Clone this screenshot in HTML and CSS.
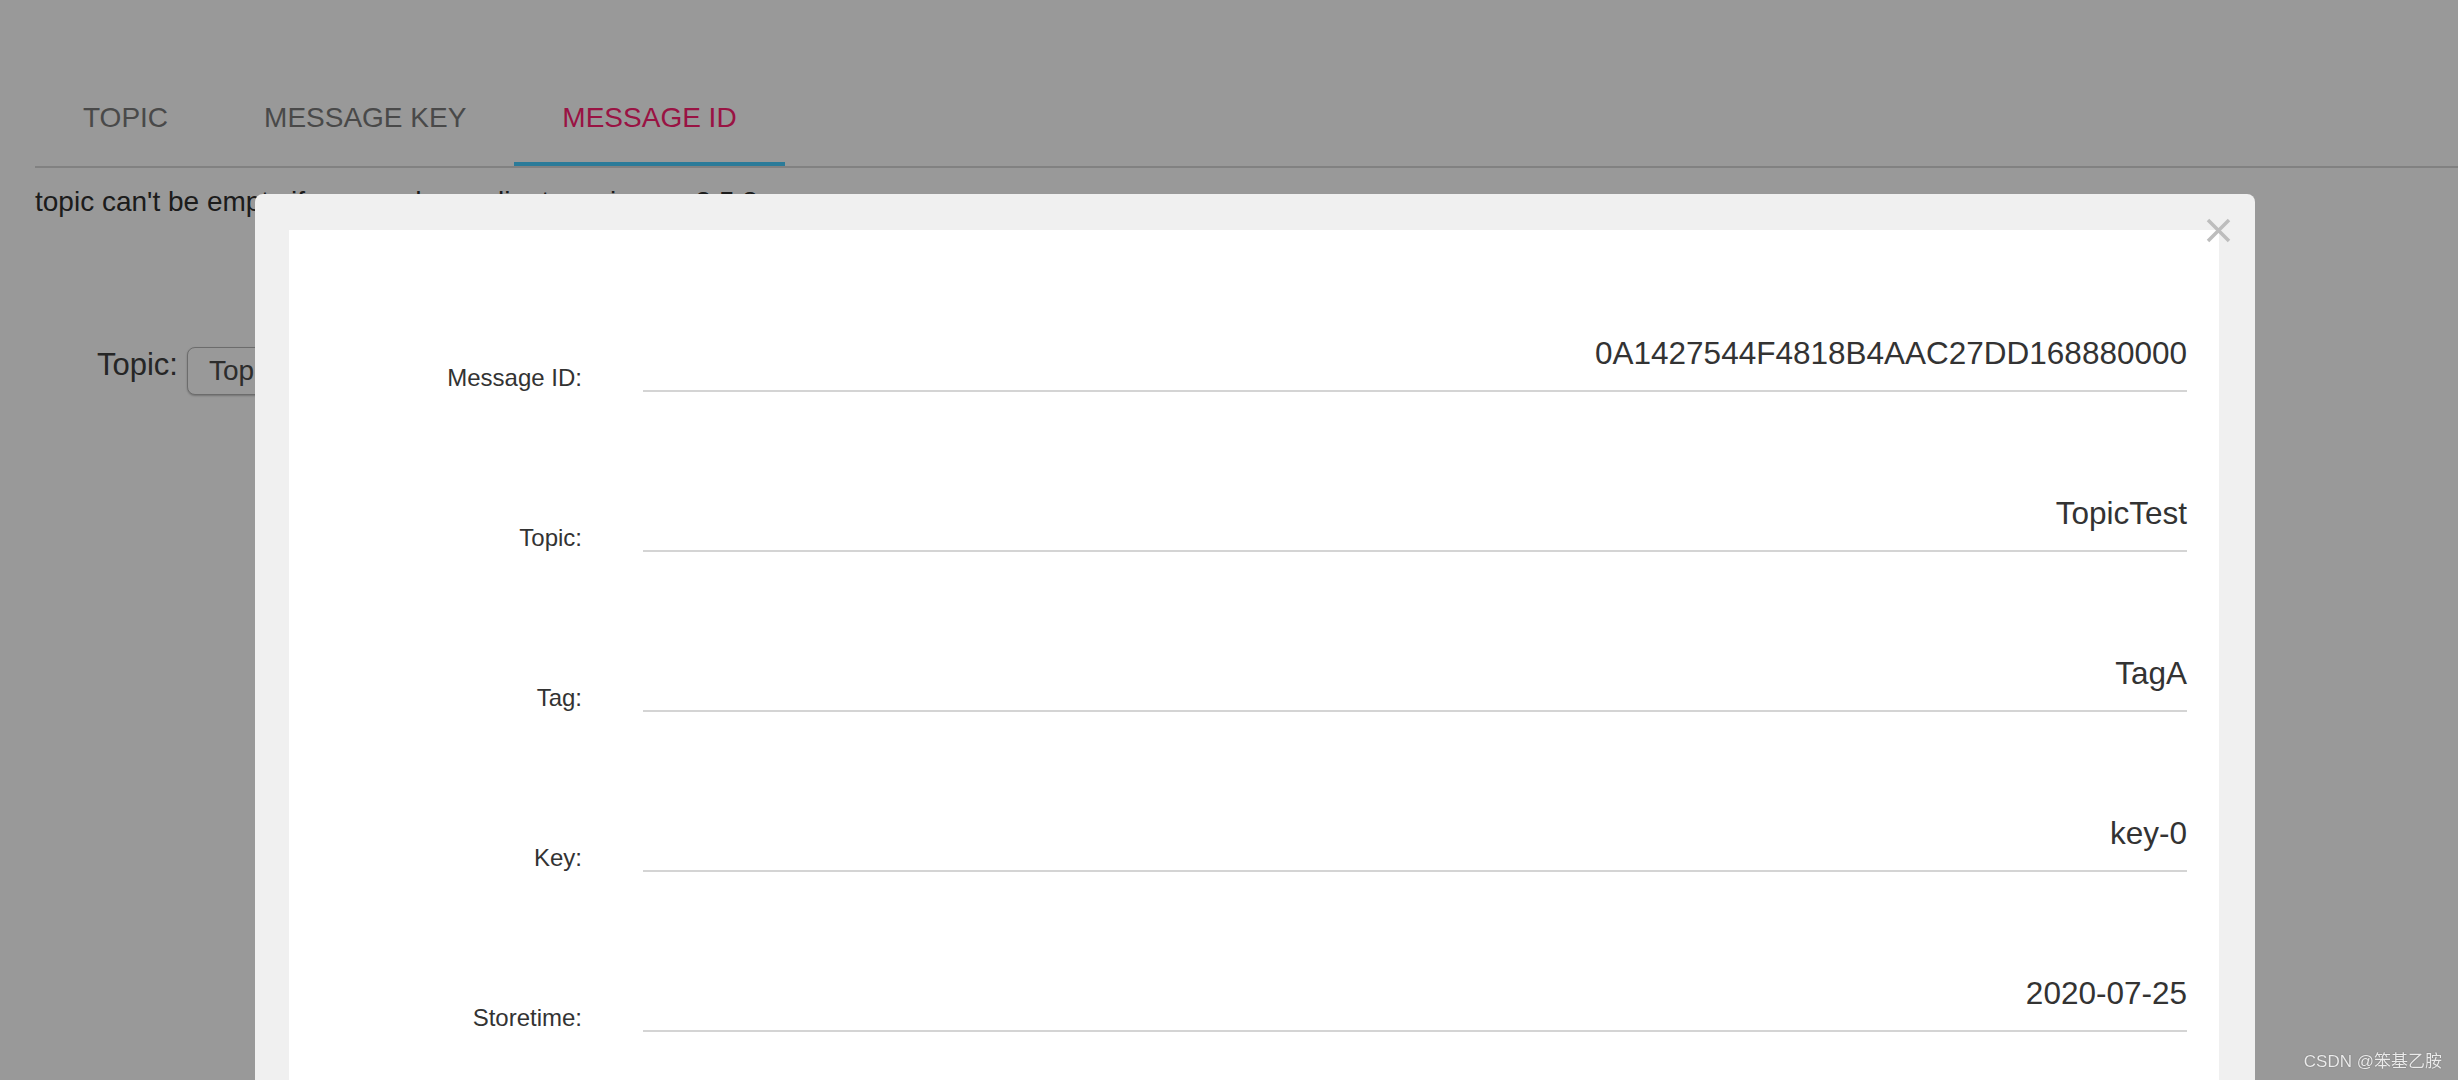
FILE: index.html
```html
<!DOCTYPE html>
<html lang="en">
<head>
<meta charset="utf-8">
<title>Message</title>
<link rel="stylesheet" href="styles.css">
</head>
<body>
<div class="page">
  <nav class="tabs">
    <div class="tab">TOPIC</div>
    <div class="tab">MESSAGE KEY</div>
    <div class="tab active">MESSAGE ID</div>
  </nav>
  <p class="hint">topic can't be empty if you producer client version &gt;= 3.5.8</p>
  <div class="query">
    <label class="query-label" for="topic">Topic:</label>
    <input class="query-input" id="topic" type="text" placeholder="Topic">
  </div>
</div>

<div class="backdrop"></div>

<div class="modal">
  <button class="modal-close" type="button" aria-label="Close">
    <svg width="25" height="25" viewBox="0 0 25 25"><path d="M2 2 L23 23 M23 2 L2 23" stroke="#bdbdbd" stroke-width="3.5" fill="none"/></svg>
  </button>
  <div class="modal-body">
    <div class="field-row">
      <div class="field-label">Message ID:</div>
      <div class="field-value">0A1427544F4818B4AAC27DD168880000</div>
    </div>
    <div class="field-row">
      <div class="field-label">Topic:</div>
      <div class="field-value">TopicTest</div>
    </div>
    <div class="field-row">
      <div class="field-label">Tag:</div>
      <div class="field-value">TagA</div>
    </div>
    <div class="field-row">
      <div class="field-label">Key:</div>
      <div class="field-value">key-0</div>
    </div>
    <div class="field-row">
      <div class="field-label">Storetime:</div>
      <div class="field-value">2020-07-25</div>
    </div>
  </div>
</div>

<div class="watermark">CSDN @笨基乙胺</div>
</body>
</html>
```
FILE: styles.css
```css
html, body {
  margin: 0;
  height: 100%;
  overflow: hidden;
}

body {
  font-family: "Liberation Sans", Arial, "Noto Sans CJK SC", sans-serif;
  background: #ffffff;
}

.page {
  padding: 94px 0 0 35px;
}

.tabs {
  display: flex;
  border-bottom: 2px solid #d8d8d8;
}

.tab {
  font-size: 28px;
  line-height: 48px;
  padding: 0 48px 20px;
  border-bottom: 4px solid transparent;
  color: #7b7b7b;
}

.tab.active {
  color: #ff2170;
  border-bottom-color: #49ceff;
}

.hint {
  margin: 18px 0 0;
  font-size: 28px;
  line-height: 32px;
  color: #2f2f2f;
}

.query {
  display: flex;
  align-items: flex-start;
  gap: 9px;
  margin-top: 129px;
  padding-left: 62px;
}

.query-label {
  font-size: 31px;
  line-height: 36px;
  color: #404040;
}

.query-input {
  width: 420px;
  height: 48px;
  box-sizing: border-box;
  border: 1px solid #b5b5b5;
  border-radius: 8px;
  padding: 0 21px;
  font: 28px "Liberation Sans", Arial, sans-serif;
  color: #4b4b4b;
  background: #fff;
  box-shadow: 0 1px 2px rgba(0, 0, 0, 0.25);
}

.query-input::placeholder {
  color: #4b4b4b;
  opacity: 1;
}

.backdrop {
  position: fixed;
  inset: 0;
  background: rgba(0, 0, 0, 0.4);
}

.modal {
  position: fixed;
  left: 255px;
  top: 194px;
  width: 2000px;
  bottom: -20px;
  box-sizing: border-box;
  padding: 36px 36px 0 34px;
  background: #f0f0f0;
  border-radius: 8px;
}

.modal-close {
  position: absolute;
  top: 24px;
  right: 24px;
  width: 25px;
  height: 25px;
  padding: 0;
  border: 0;
  background: none;
  display: block;
}

.modal-close svg {
  display: block;
}

.modal-body {
  height: 100%;
  box-sizing: border-box;
  padding: 2px 32px 0 0;
  background: #ffffff;
}

.field-row {
  display: flex;
  align-items: flex-end;
  height: 160px;
}

.field-label {
  flex: none;
  width: 293px;
  text-align: right;
  font-size: 24px;
  line-height: 28px;
  color: #333333;
}

.field-value {
  flex: 1;
  margin-left: 61px;
  padding-bottom: 19px;
  border-bottom: 2px solid #d4d4d4;
  text-align: right;
  font-size: 31.5px;
  line-height: 36px;
  color: #333333;
}

.watermark {
  position: fixed;
  right: 16px;
  bottom: 8px;
  font-size: 17px;
  line-height: 20px;
  color: rgba(255, 255, 255, 0.88);
  text-shadow: 0 0 1px rgba(0, 0, 0, 0.5);
}
```
